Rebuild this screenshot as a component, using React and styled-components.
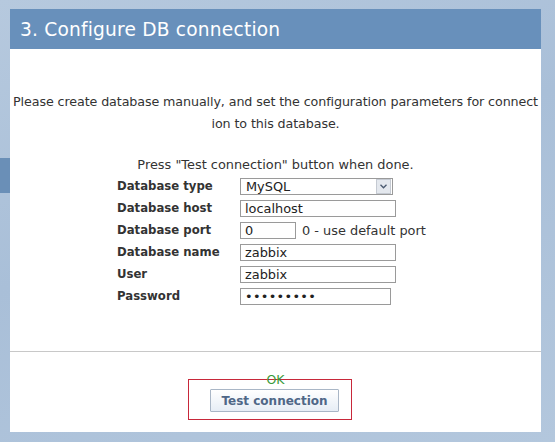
import styled, { createGlobalStyle } from "styled-components";

const Global = createGlobalStyle`
  html, body { margin: 0; padding: 0; }
  body {
    width: 555px;
    height: 442px;
    overflow: hidden;
    font-family: "DejaVu Sans", Verdana, sans-serif;
  }
`;

const Page = styled.div`
  position: relative;
  width: 555px;
  height: 442px;
  box-sizing: border-box;
  padding: 9px 14px 10px 10px;
  background: linear-gradient(160deg, #b6c9de 0%, #a9bfd8 45%, #b3c7dd 100%);
`;

// darker tab peeking out behind the panel on the left
const SideTab = styled.div`
  position: absolute;
  left: 0;
  top: 158px;
  width: 10px;
  height: 35px;
  background: #6a8fb7;
`;

const Panel = styled.div`
  display: flex;
  flex-direction: column;
  height: 100%;
  background: #fff;
`;

const Header = styled.div`
  height: 40px;
  display: flex;
  align-items: center;
  padding-left: 10px;
  background: #6890bb;
  color: #fff;
  font-size: 18.6px;
  letter-spacing: 0.2px;
`;

const Body = styled.div`
  flex: 1;
  display: flex;
  flex-direction: column;
  padding-top: 42px;
  color: #333;
  font-size: 12.9px;
`;

const Intro = styled.p`
  margin: 0;
  padding: 0 2px;
  text-align: center;
  line-height: 22px;
  font-size: 12.7px;
  letter-spacing: -0.1px;
  word-break: break-all;
`;

const Hint = styled.p`
  margin: 20px 0 0;
  text-align: center;
  line-height: 20px;
`;

const Form = styled.div`
  display: grid;
  grid-template-columns: 123px auto;
  grid-auto-rows: 22px;
  align-items: center;
  padding-left: 107px;
`;

const Label = styled.div`
  font-weight: bold;
  font-size: 11.7px;
  color: #333;
`;

const Field = styled.div`
  display: flex;
  align-items: center;
  gap: 6px;
`;

const Input = styled.div`
  box-sizing: border-box;
  width: ${(p) => p.$w}px;
  height: 17px;
  border: 1px solid #9a9a9a;
  padding: 0 4px;
  line-height: 15px;
  color: #222;
  letter-spacing: ${(p) => (p.$dots ? "0.3px" : "0")};
`;

const Select = styled.div`
  box-sizing: border-box;
  width: 153px;
  height: 17px;
  border: 1px solid #9a9a9a;
  display: flex;
  align-items: center;
  justify-content: space-between;
  padding-left: 5px;
  color: #222;
`;

const Arrow = styled.div`
  width: 13px;
  height: 13px;
  margin-right: 1px;
  background: #e4e8ee;
  border: 1px solid #c5cad2;
  display: flex;
  align-items: center;
  justify-content: center;
`;

const Note = styled.span`
  color: #333;
`;

const Separator = styled.hr`
  margin: auto 0 0;
  border: 0;
  border-top: 1px solid #c8c8c8;
`;

const Footer = styled.div`
  height: 80px;
  display: flex;
  flex-direction: column;
  align-items: center;
  padding-top: 21px;
  box-sizing: border-box;
`;

const Ok = styled.div`
  color: #3a9a3a;
  font-size: 12.5px;
  line-height: 14px;
  margin-bottom: -8px;
  position: relative;
`;

const Highlight = styled.div`
  box-sizing: border-box;
  width: 164px;
  height: 41px;
  margin-right: 11px;
  border: 1px solid #c8283a;
  display: flex;
  align-items: center;
  padding: 2px 0 0 21px;
`;

const Button = styled.button`
  box-sizing: border-box;
  width: 129px;
  height: 23px;
  border: 1px solid #a9b6c6;
  border-radius: 1px;
  background: linear-gradient(#ffffff, #e6edf5);
  color: #4f6787;
  font-family: "DejaVu Sans", Verdana, sans-serif;
  font-weight: bold;
  font-size: 12px;
  padding: 0;
`;

const fields = [
  { label: "Database host", value: "localhost", w: 156 },
  { label: "Database port", value: "0", w: 56, note: "0 - use default port" },
  { label: "Database name", value: "zabbix", w: 156 },
  { label: "User", value: "zabbix", w: 156 },
  { label: "Password", value: "•••••••••", w: 151, dots: true },
];

export default function App() {
  return (
    <>
      <Global />
      <Page>
        <SideTab />
        <Panel>
          <Header>3. Configure DB connection</Header>
          <Body>
            <Intro>
              Please create database manually, and set the configuration
              parameters for connection to this database.
            </Intro>
            <Hint>Press "Test connection" button when done.</Hint>
            <Form>
              <Label>Database type</Label>
              <Field>
                <Select>
                  MySQL
                  <Arrow>
                    <svg width="7" height="5" viewBox="0 0 7 5">
                      <path d="M0.5 0.8 L3.5 3.8 L6.5 0.8" fill="none" stroke="#4a5a70" strokeWidth="1.3" />
                    </svg>
                  </Arrow>
                </Select>
              </Field>
              {fields.map((f) => (
                <>
                  <Label key={f.label}>{f.label}</Label>
                  <Field key={f.label + "-f"}>
                    <Input $w={f.w} $dots={f.dots}>{f.value}</Input>
                    {f.note && <Note>{f.note}</Note>}
                  </Field>
                </>
              ))}
            </Form>
            <Separator />
            <Footer>
              <Ok>OK</Ok>
              <Highlight>
                <Button>Test connection</Button>
              </Highlight>
            </Footer>
          </Body>
        </Panel>
      </Page>
    </>
  );
}
